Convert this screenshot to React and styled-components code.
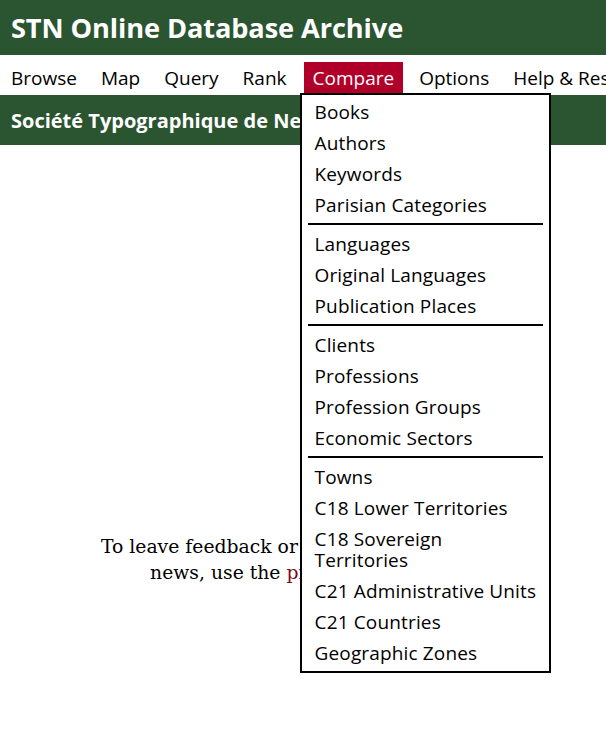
import React from "react";
import styled, { createGlobalStyle } from "styled-components";

const GlobalStyle = createGlobalStyle`
  html, body {
    margin: 0;
    padding: 0;
    background: #fff;
  }
  body {
    font-family: "Open Sans", "DejaVu Sans", sans-serif;
    color: #000;
  }
`;

const GREEN = "#2b5430";
const RED = "#b0002a";

const Page = styled.div`
  width: 606px;
  min-height: 740px;
  overflow: hidden;
`;

const Banner = styled.header`
  background: ${GREEN};
  height: 55px;
  display: flex;
  align-items: center;
  padding-left: 11px;
`;

const Title = styled.h1`
  margin: 0;
  color: #fff;
  font-size: 27.2px;
  font-weight: 700;
  letter-spacing: -0.1px;
`;

const NavBar = styled.nav`
  height: 40px;
  box-sizing: border-box;
  display: flex;
  align-items: flex-end;
  padding: 0 0 2px 3px;
  gap: 8px;
  white-space: nowrap;
`;

const NavItem = styled.div`
  position: relative;
  height: 31px;
  display: flex;
  align-items: center;
  padding: 0 ${(p) => (p.$active ? "9px" : "8px")};
  margin-left: ${(p) => (p.$active ? "1px" : "0")};
  font-size: 19px;
  background: ${(p) => (p.$active ? RED : "transparent")};
  color: ${(p) => (p.$active ? "#fff" : "#000")};
`;

const SubBanner = styled.div`
  background: ${GREEN};
  height: 50px;
  display: flex;
  align-items: center;
  padding-left: 11px;
  color: #fff;
  font-size: 20px;
  font-weight: 700;
  white-space: nowrap;
`;

const Dropdown = styled.ul`
  position: absolute;
  left: -4px;
  top: 100%;
  width: 247px;
  margin: 0;
  padding: 2px 0 2px;
  list-style: none;
  background: #fff;
  border: 2px solid #000;
  color: #000;
  z-index: 10;
`;

const MenuItem = styled.li`
  font-size: 19px;
  line-height: 21px;
  letter-spacing: 0.15px;
  padding: 5px 8px 5px 13px;
  white-space: nowrap;
`;

const Divider = styled.li`
  height: 2px;
  background: #000;
  margin: 2px 6px 4px;
`;

const Main = styled.main`
  padding-top: 389px;
  text-align: center;
  font-family: "DejaVu Serif", "Liberation Serif", serif;
  font-size: 18.8px;
  line-height: 26px;
`;

const FormLink = styled.a`
  color: #7a0a1a;
  text-decoration: none;
`;

const groups = [
  ["Books", "Authors", "Keywords", "Parisian Categories"],
  ["Languages", "Original Languages", "Publication Places"],
  ["Clients", "Professions", "Profession Groups", "Economic Sectors"],
  [
    "Towns",
    "C18 Lower Territories",
    "C18 Sovereign\nTerritories",
    "C21 Administrative Units",
    "C21 Countries",
    "Geographic Zones",
  ],
];

const navLinks = ["Browse", "Map", "Query", "Rank", "Compare", "Options", "Help & Resources"];

const CompareMenu = () => (
  <Dropdown>
    {groups.map((group, gi) => (
      <React.Fragment key={gi}>
        {gi > 0 && <Divider />}
        {group.map((label) => (
          <MenuItem key={label}>
            {label.split("\n").map((part, i) => (
              <React.Fragment key={i}>
                {i > 0 && <br />}
                {part}
              </React.Fragment>
            ))}
          </MenuItem>
        ))}
      </React.Fragment>
    ))}
  </Dropdown>
);

export default function App() {
  return (
    <>
      <GlobalStyle />
      <Page>
        <Banner>
          <Title>STN Online Database Archive</Title>
        </Banner>
        <NavBar>
          {navLinks.map((link) => (
            <NavItem key={link} $active={link === "Compare"}>
              {link}
              {link === "Compare" && <CompareMenu />}
            </NavItem>
          ))}
        </NavBar>
        <SubBanner>Société Typographique de Neuchâtel, 1769-1794</SubBanner>
        <Main>
          To leave feedback or to sign up for project
          <br />
          news, use the <FormLink href="#">project web form</FormLink>.
        </Main>
      </Page>
    </>
  );
}
